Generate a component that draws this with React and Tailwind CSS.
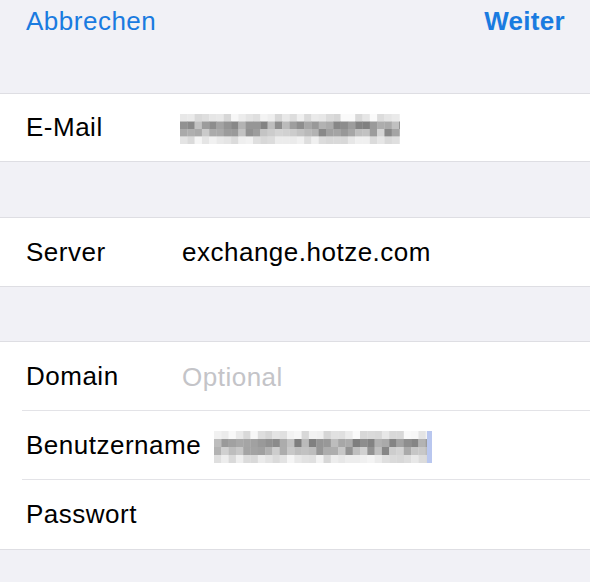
import React from "react";

const font = { fontFamily: '"Liberation Sans", Arial, sans-serif' };

function Pixelated({ width, height, seed, cursor }) {
  const cw = 7.3;
  const cols = Math.ceil(width / cw);
  const rows = 4;
  const rh = height / rows;
  const bases = [232, 160, 175, 230];
  const spread = [40, 70, 80, 30];
  const rects = [];
  let s = seed;
  const rnd = () => {
    s = (s * 9301 + 49297) % 233280;
    return s / 233280;
  };
  for (let r = 0; r < rows; r++) {
    for (let c = 0; c < cols; c++) {
      const v = Math.round(bases[r] + (rnd() - 0.5) * spread[r]);
      const g = Math.max(105, Math.min(250, v));
      rects.push(
        <rect
          key={r + "-" + c}
          x={c * cw}
          y={r * rh}
          width={Math.min(cw, width - c * cw) + 0.3}
          height={rh + 0.3}
          fill={`rgb(${g},${g},${g})`}
        />
      );
    }
  }
  return (
    <svg width={width + (cursor ? 2 : 0)} height={height} className="block">
      {rects}
      {cursor && <rect x={width - 3} y={0} width={5} height={height} fill="#b9c7ef" />}
    </svg>
  );
}

function Row({ label, children, h = "h-[68px]", divider, labelW = "w-[156px]" }) {
  return (
    <div className={`relative flex ${h} items-center bg-white pl-[26px]`}>
      <div className={`${labelW} shrink-0 text-[26px] tracking-[0.5px] text-black`}>{label}</div>
      {children}
      {divider && <div className="absolute bottom-0 left-[22px] right-0 h-px bg-[#e3e3e7]" />}
    </div>
  );
}

export default function App() {
  return (
    <div style={font} className="h-[582px] w-[590px] overflow-hidden bg-[#f1f1f6]">
      <div className="flex h-[93px] items-start justify-between pl-[26px] pr-[25px] pt-[2px]">
        <span className="text-[26px] tracking-[0.5px] text-[#1a7be0]">Abbrechen</span>
        <span className="text-[26px] font-bold tracking-[0.3px] text-[#1a7be0]">Weiter</span>
      </div>
      <div className="border-y border-[#dedee3]">
        <Row label="E-Mail" h="h-[67px]">
          <div className="-ml-[2px] pt-[3px]">
            <Pixelated width={220} height={30} seed={7} />
          </div>
        </Row>
      </div>
      <div className="h-[55px]" />
      <div className="border-y border-[#dedee3]">
        <Row label="Server">
          <span className="text-[26px] tracking-[0.5px] text-black">exchange.hotze.com</span>
        </Row>
      </div>
      <div className="h-[54px]" />
      <div className="border-y border-[#dedee3]">
        <Row label="Domain" h="h-[69px]" divider>
          <span className="pt-[2px] text-[26px] tracking-[0.5px] text-[#c4c4c8]">Optional</span>
        </Row>
        <Row label="Benutzername" h="h-[69px]" divider labelW="w-auto pr-[13px]">
          <div className="pt-[2px]">
            <Pixelated width={216} height={32} seed={13} cursor />
          </div>
        </Row>
        <Row label="Passwort" h="h-[69px]" />
      </div>
    </div>
  );
}
